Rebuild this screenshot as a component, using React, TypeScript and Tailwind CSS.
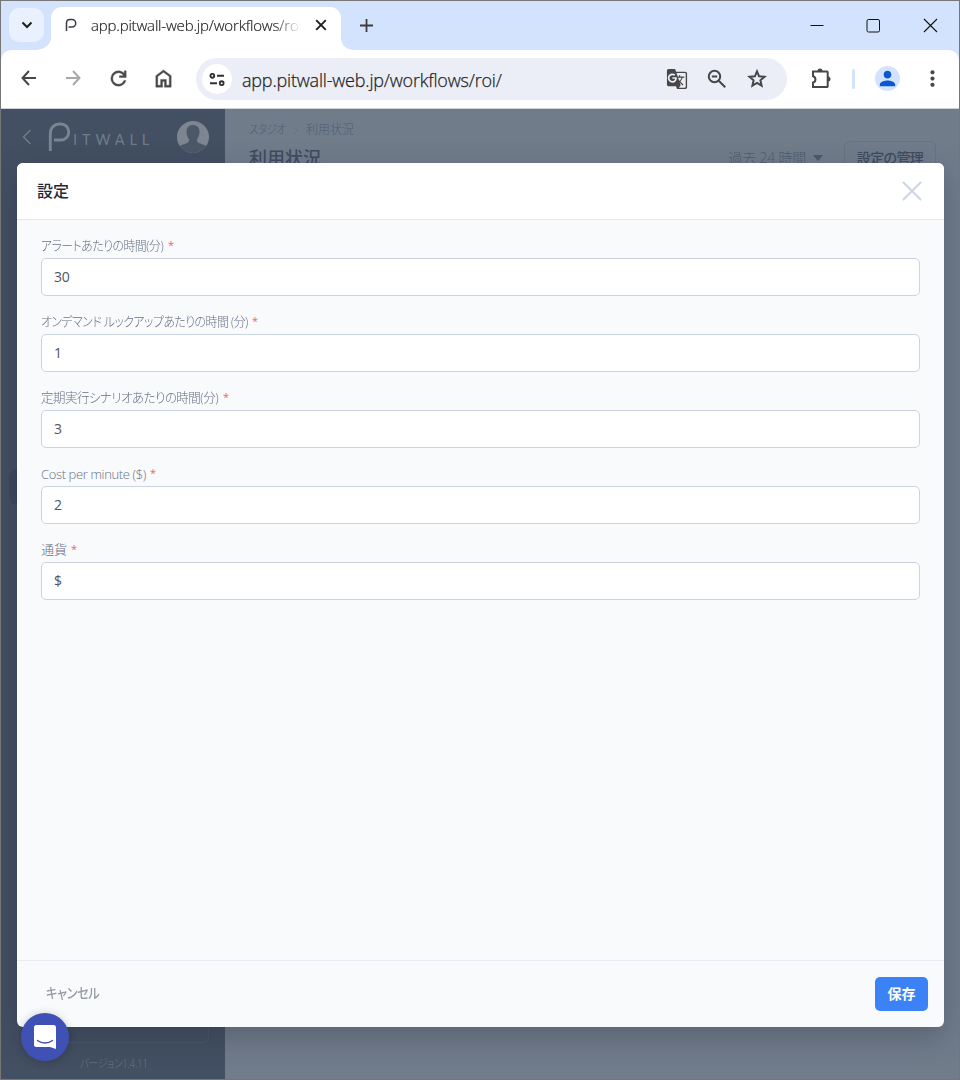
import React from "react";
import { MdGTranslate, MdMoreVert, MdPerson } from "react-icons/md";

const url = "app.pitwall-web.jp/workflows/roi/";

function TabStrip() {
  return (
    <div className="flex h-[49px] shrink-0 items-start bg-[#d3e3fd]">
      <button className="ml-2 mt-[7px] flex h-[34px] w-[35px] shrink-0 items-center justify-center rounded-[10px] bg-[#e9f1fe]">
        <svg width="12" height="8" viewBox="0 0 12 8" fill="none" stroke="#1f1f1f" strokeWidth="2"><path d="M1.500 1.500 6 6l4.500-4.500" /></svg>
      </button>
      <svg className="-ml-[9px] shrink-0 self-end" width="16" height="13" viewBox="0 0 16 13"><path d="M16 0v13H0C9 13 16 8 16 0Z" fill="#fff" /></svg>
      <div className="mt-[6px] flex h-[43px] w-[290px] shrink-0 items-center rounded-t-[11px] bg-white pb-[7px] pl-[14px]">
        <svg width="12" height="14" viewBox="0 0 12 14" fill="none" stroke="#3c3c46" strokeWidth="1.500"><path d="M1.500 13V5C1.500 2.400 3 1.500 5 1.500h2A3.700 3.700 0 0 1 7 9H3.500" /></svg>
        <div className="ml-[14px] w-[210px] shrink-0 overflow-hidden whitespace-nowrap text-[15px] font-light leading-5 tracking-[-0.18px] text-[#1f1f1f] [-webkit-text-stroke:0.2px_#1f1f1f] [mask-image:linear-gradient(to_right,black_183px,transparent_210px)]">{url}</div>
        <svg className="ml-[14px] shrink-0" width="12" height="12" viewBox="0 0 12 12" stroke="#1f1f1f" strokeWidth="1.900"><path d="m1.200 1.200 9.600 9.600m0-9.600-9.600 9.600" /></svg>
      </div>
      <svg className="shrink-0 self-end" width="14" height="13" viewBox="0 0 14 13"><path d="M0 0v13h14C5 13 0 8 0 0Z" fill="#fff" /></svg>
      <svg className="ml-[5px] mt-[18px]" width="13" height="13" viewBox="0 0 13 13" stroke="#3c3c3c" strokeWidth="1.800"><path d="M6.500 0v13M0 6.500h13" /></svg>
      <div className="ml-auto mr-[21px] mt-[17px] flex items-center gap-[42px] text-[#111]">
        <svg width="14" height="15" viewBox="0 0 14 15" stroke="currentColor"><path d="M.5 7.500h13" /></svg>
        <svg width="15" height="15" viewBox="0 0 15 15" fill="none" stroke="currentColor"><rect x="1" y="1.500" width="12.500" height="12.500" rx="1.500" /></svg>
        <svg width="15" height="15" viewBox="0 0 15 15" stroke="currentColor" strokeWidth="1.100"><path d="m1 1 13 13m0-13L1 14" /></svg>
      </div>
    </div>
  );
}

function Toolbar() {
  return (
    <div className="bg-[#d3e3fd]">
      <div className="flex h-[59px] items-center rounded-t-[10px] border-b border-[#cdd0d5] bg-white text-[#474747]">
        <svg className="mb-[2px] ml-[20px] shrink-0" width="15" height="16" viewBox="0 0 15 16" fill="none" stroke="currentColor" strokeWidth="2"><path d="M8 1 1.500 8 8 15M1.500 8H15" /></svg>
        <svg className="mb-[2px] ml-[30px] shrink-0" width="15" height="16" viewBox="0 0 15 16" fill="none" stroke="#a8a8a8" strokeWidth="2"><path d="m7 1 6.500 7L7 15M13.500 8H0" /></svg>
        <svg className="mb-px ml-[26px] shrink-0" width="23" height="23" viewBox="0 -960 960 960" fill="currentColor" stroke="currentColor" strokeWidth="16"><path d="M480-160q-134 0-227-93t-93-227q0-134 93-227t227-93q69 0 132 28.500T720-690v-110h80v280H520v-80h168q-32-56-87.500-88T480-720q-100 0-170 70t-70 170q0 100 70 170t170 70q77 0 139-44t87-116h84q-28 106-114 173t-196 67Z" /></svg>
        <svg className="mb-px ml-[22px] shrink-0" width="23" height="23" viewBox="0 -960 960 960" fill="currentColor" stroke="currentColor" strokeWidth="16"><path d="M240-200h120v-240h240v240h120v-360L480-740 240-560v360Zm-80 80v-480l320-240 320 240v480H520v-240h-80v240H160Z" /></svg>
        <div className="ml-[21px] flex h-[42px] w-[591px] shrink-0 items-center rounded-full bg-[#eceef7] pl-[6px]">
          <div className="flex size-[30px] shrink-0 items-center justify-center rounded-full bg-white">
            <svg width="16" height="13" viewBox="0 0 16 13" fill="none" stroke="#303030" strokeWidth="1.900"><circle cx="3.300" cy="2.800" r="1.900" /><path d="M8 2.800h7M1 10.200h7" /><circle cx="12.700" cy="10.200" r="1.900" /></svg>
          </div>
          <div className="ml-[10px] w-[270px] whitespace-nowrap pt-px text-[18px] font-light leading-6 tracking-[-0.19px] text-[#1f1f1f] [-webkit-text-stroke:0.25px_#1f1f1f]">{url}</div>
          <MdGTranslate className="ml-auto" size={22} />
          <svg className="ml-[17px]" width="24" height="24" viewBox="0 0 24 24" fill="none" stroke="currentColor" strokeWidth="2"><circle cx="9.500" cy="9.500" r="5.700" /><path d="m13.700 13.700 6.600 6.600M6.800 9.500h5.400" /></svg>
          <svg className="ml-[16px] mr-[18px]" width="24" height="24" viewBox="0 0 24 24" fill="none" stroke="currentColor" strokeWidth="2"><path d="m12 4.300 2.100 5 5.400.5-4.100 3.500 1.200 5.300-4.600-2.800-4.600 2.800 1.200-5.300-4.100-3.500 5.400-.5Z" /></svg>
        </div>
        <svg className="ml-[22px] shrink-0" width="24" height="24" viewBox="0 0 24 24" fill="none" stroke="currentColor" strokeWidth="2"><path d="M4 4.500h14a.7.700 0 0 1 .7.700v14.100a.7.700 0 0 1-.7.700H4v-4.500a3.200 3.200 0 0 0 0-6.200V4.500Z" /><path fill="currentColor" stroke="none" d="M8.500 4a2.500 2.500 0 0 1 5 0ZM19 9.500a2.500 2.500 0 0 1 0 5Z" /></svg>
        <div className="ml-[19px] h-5 w-[3px] rounded bg-[#d3e3fd]" />
        <div className="ml-[20px] mt-[-2px] flex size-[25px] items-center justify-center rounded-full bg-[#d3e3fd]"><MdPerson className="text-[#0b57d0]" size={23} /></div>
        <MdMoreVert className="mb-px ml-[20px]" size={25} />
      </div>
    </div>
  );
}

function Background() {
  return (
    <div className="flex h-full">
      <aside className="flex w-[224px] shrink-0 flex-col bg-[#434f62]">
        <div className="flex h-14 items-center pl-[21px]">
          <svg className="shrink-0" width="10" height="16" viewBox="0 0 10 16" fill="none" stroke="#707b8a" strokeWidth="1.400"><path d="M8.500 1 1.500 8l7 7" /></svg>
          <svg className="ml-[16px] shrink-0" width="24" height="30" viewBox="0 0 24 30" fill="none" stroke="#7a8592" strokeWidth="2.900"><path d="M2.300 29V11a9 9 0 0 1 9-9h1.500a8 8 0 0 1 0 16H6" /></svg>
          <div className="ml-[1px] mt-[5px] w-[82px] shrink-0 whitespace-nowrap font-['Lato'] text-[14.500px] leading-4 tracking-[4.900px] text-[#707c8b]">ITWALL</div>
          <svg className="ml-[22px] shrink-0" width="32" height="32" viewBox="0 0 32 32"><circle cx="16" cy="16" r="16" fill="#7d8590" /><path fill="#4c5868" d="M16 4c4.500 0 6.500 3 6.500 6.500 0 3-.8 5-2.200 7.500-.8 1.500 0 3.500 2 4.300l7 2.500A16 16 0 0 1 2.700 24.800l7-2.500c2-.8 2.800-2.800 2-4.300C10.300 15.500 9.500 13.500 9.500 10.500 9.500 7 11.500 4 16 4Z" /></svg>
        </div>
        <div className="ml-2 mt-[304px] h-9 rounded-l-lg bg-[#3c475b]" />
        <div className="ml-4 mr-4 mt-auto h-10 rounded-[5px] border border-[#4a5668]" />
        <div className="mb-[5px] mt-[11px] h-5 origin-center scale-x-[0.81] whitespace-nowrap pl-[2px] text-center text-[12px] leading-5 tracking-[-0.4px] text-[#5c697a] [font-feature-settings:'palt']">バージョン1.4.11</div>
      </aside>
      <main className="min-w-0 flex-1 bg-[#717c8b] pl-6 pr-[23px] pt-[12px]">
        <div className="flex h-[18px] items-center text-[12px] font-light leading-[18px] text-[#505d70]">
          <span className="w-[37px] origin-left scale-x-[0.88] whitespace-nowrap tracking-[-0.7px] [font-feature-settings:'palt']">スタジオ</span>
          <svg className="ml-[8px] mr-[8px] shrink-0" width="4" height="7" viewBox="0 0 4 7" fill="none" stroke="#657182"><path d="m.5.500 3 3-3 3" /></svg><span className="w-[48px] whitespace-nowrap">利用状況</span>
        </div>
        <div className="flex justify-between">
          <h1 className="mt-[3px] text-[18px] font-medium leading-8 text-[#3f4b60]">利用状況</h1>
          <div className="flex">
            <span className="mt-[7px] text-[14px] font-light leading-6 tracking-[-0.2px] text-[#4f5c6e]">過去 24 時間</span>
            <span className="ml-[7px] mt-[16px] h-0 w-0 border-x-[5px] border-t-[6px] border-x-transparent border-t-[#4b586b]" />
            <div className="ml-[21px] mt-[2px] h-9 w-[92px] rounded-md border border-[#667382] text-center text-[14px] font-medium leading-[31px] tracking-[-0.6px] text-[#3f4b60] [font-feature-settings:'palt']">設定の管理</div>
          </div>
        </div>
      </main>
    </div>
  );
}

function Field({ label, value }: { label: React.ReactNode; value: string }) {
  return (
    <label className="block h-[76px]">
      <span className="flex h-[24px] items-start whitespace-nowrap text-[13px] font-light leading-[22px] text-[#667085]">{label}<span className="ml-1 text-[11px] font-normal text-[#ef6464]">*</span></span>
      <span className="flex h-[38px] items-center rounded-[5px] border border-[#cbd5e1] bg-white pb-[2px] pl-3 text-[14px] tracking-[-0.3px] text-[#4b5563]">{value}</span>
    </label>
  );
}

const kana = "block origin-left whitespace-nowrap tracking-[-0.5px] [font-feature-settings:'palt']";

function SettingsModal() {
  return (
    <section className="absolute left-4 top-[54px] flex h-[864px] w-[927px] flex-col overflow-hidden rounded-[6px] bg-[#f9fafc] shadow-[0_10px_30px_rgba(31,41,55,0.3)]">
      <header className="flex h-[57px] shrink-0 items-center justify-between border-b border-[#e2e8f0] bg-white pl-[20px] pr-[22px]">
        <h2 className="text-[16px] font-medium text-[#1e293b]">設定</h2>
        <svg width="20" height="20" viewBox="0 0 20 20" stroke="#cbd5e1" strokeWidth="1.900"><path d="m1 1 18 18m0-18L1 19" /></svg>
      </header>
      <div className="flex-1 px-6 pt-[14px]">
        <Field label={<span className="w-[123px]"><span className={`${kana} scale-x-[0.911]`}>アラートあたりの時間(分)</span></span>} value="30" />
        <Field label={<span className="w-[207px]"><span className={`${kana} scale-x-[0.91]`}>オンデマンド ルックアップあたりの時間 (分)</span></span>} value="1" />
        <Field label={<span className="w-[178px]"><span className={`${kana} scale-x-[0.957]`}>定期実行シナリオあたりの時間(分)</span></span>} value="3" />
        <Field label={<span className="w-[105px] pt-px tracking-[-0.37px]">Cost per minute ($)</span>} value="2" />
        <Field label="通貨" value="$" />
      </div>
      <footer className="flex h-[67px] shrink-0 items-center justify-between border-t border-[#e9edf3] pl-[29px] pr-4">
        <button className="mb-[3px] w-[54px] text-[14px] text-[#9499a5]"><span className="block origin-left scale-x-[0.87] whitespace-nowrap text-left font-medium tracking-[-0.4px] [font-feature-settings:'palt']">キャンセル</span></button>
        <button className="h-[34px] w-[53px] rounded-[5px] bg-[#3b82f6] text-[14px] font-bold leading-[34px] text-white">保存</button>
      </footer>
    </section>
  );
}

export default function App() {
  return (
    <div className="flex h-[1080px] w-[960px] flex-col overflow-hidden border border-[#767676] bg-white font-['Open_Sans','Noto_Sans_CJK_JP',sans-serif]">
      <TabStrip />
      <Toolbar />
      <div className="relative min-h-0 flex-1 overflow-hidden">
        <Background />
        <SettingsModal />
        <button className="absolute left-[20px] top-[904px] flex size-12 items-center justify-center rounded-full bg-[#4051b5] shadow-[0_1px_10px_rgba(0,0,0,0.2)]">
          <svg width="22" height="24" viewBox="0 0 22 24"><path d="M2.500 0h17A2.500 2.500 0 0 1 22 2.500V24l-6-2H2.500A2.500 2.500 0 0 1 0 19.500v-17A2.500 2.500 0 0 1 2.500 0Z" fill="#fff" /><path d="M3.500 15.500c4.500 3.300 10.500 3.300 15 0" fill="none" stroke="#4051b5" strokeWidth="1.400" strokeLinecap="round" /></svg>
        </button>
      </div>
    </div>
  );
}
